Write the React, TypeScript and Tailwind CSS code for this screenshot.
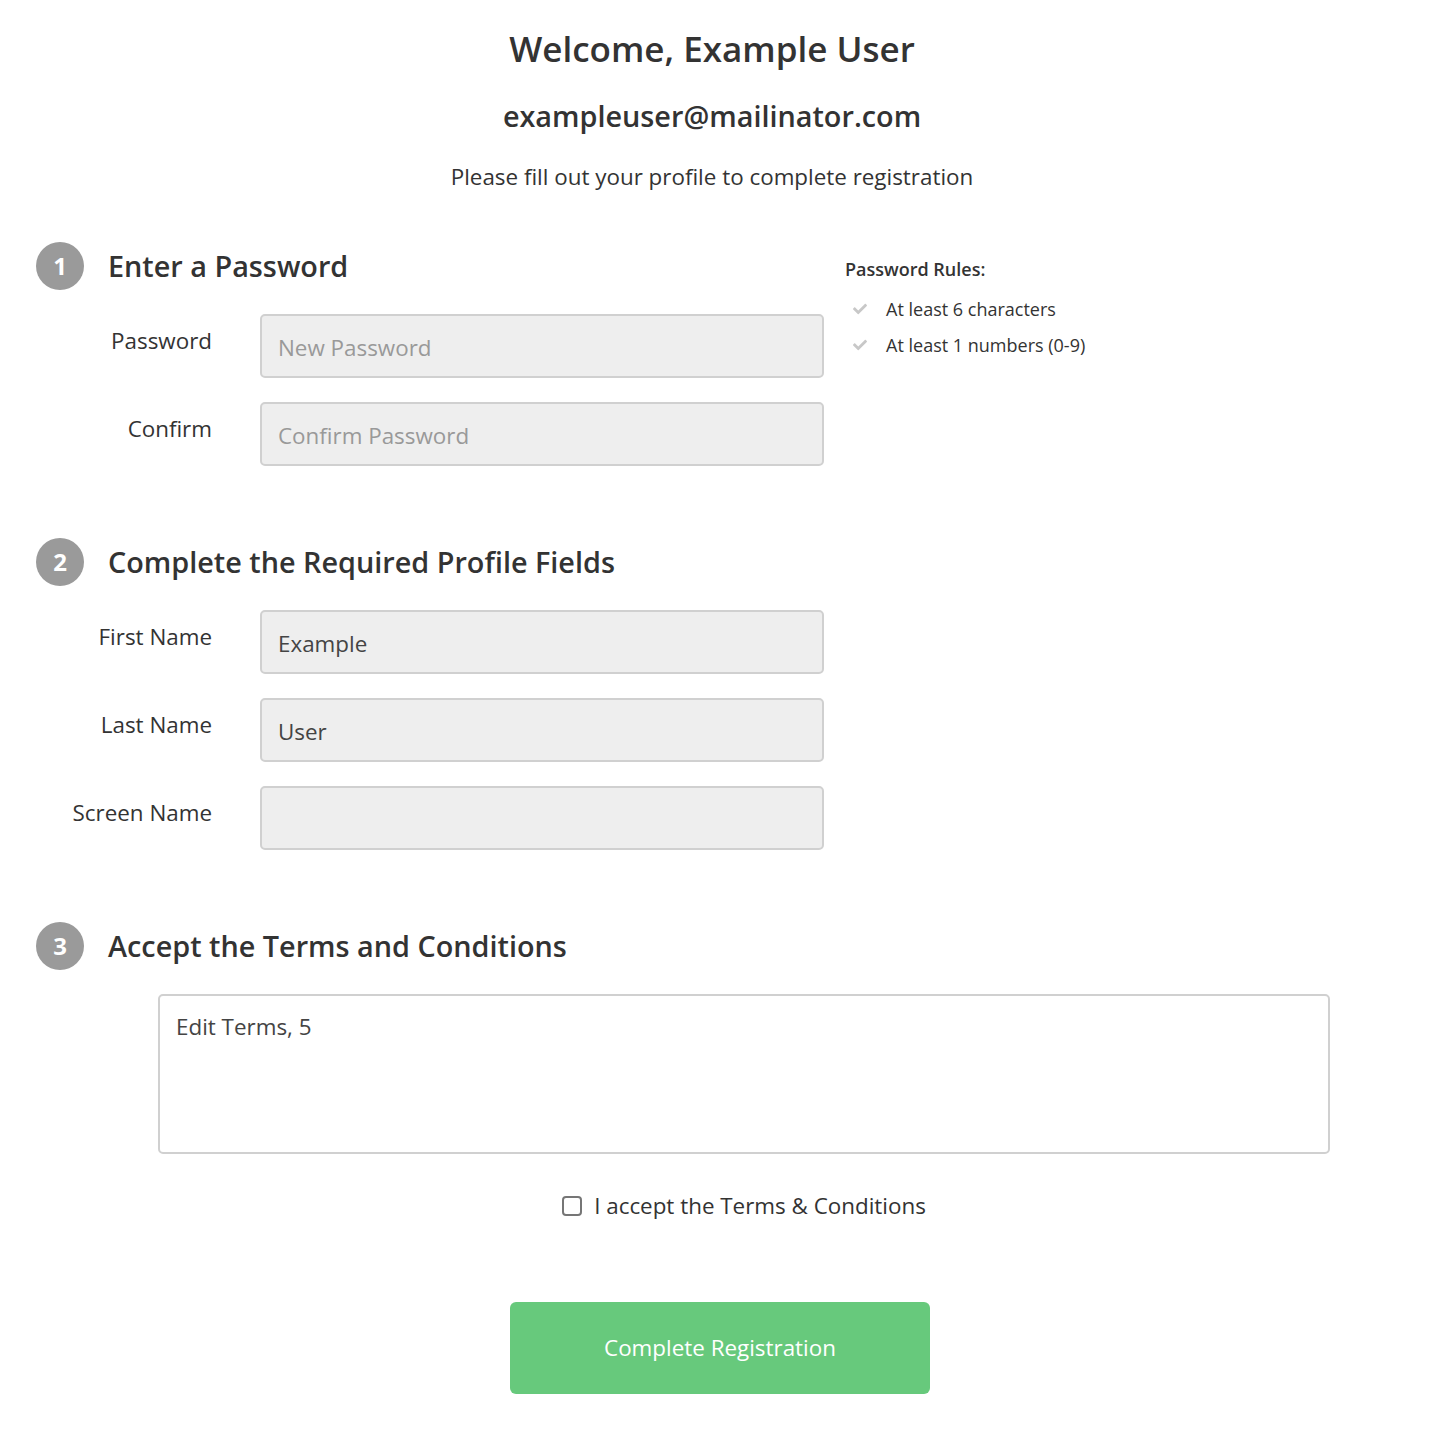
import React from 'react';
import { FaCheck } from 'react-icons/fa';

const StepHeader = ({ n, title }: { n: number; title: string }) => (
  <div className="flex items-center gap-6 h-12">
    <div className="w-12 h-12 rounded-full bg-[#9a9a9a] text-white flex items-center justify-center text-[24px] font-bold leading-none">
      {n}
    </div>
    <h2 className="text-[28.8px] font-semibold text-[#333]">{title}</h2>
  </div>
);

const Field = ({
  label,
  placeholder,
  value,
}: {
  label: string;
  placeholder?: string;
  value?: string;
}) => (
  <div className="flex items-start">
    <label className="w-[176px] text-right text-[22.4px] leading-[30px] text-[#333] pt-[12px]">{label}</label>
    <input
      type="text"
      placeholder={placeholder}
      defaultValue={value}
      className="ml-12 w-[564px] h-16 bg-[#eee] border-2 border-[#d0d0d0] rounded-[5px] px-4 pt-[2px] text-[22.4px] text-[#444] placeholder:text-[#999] outline-none"
    />
  </div>
);

const rules = ['At least 6 characters', 'At least 1 numbers (0-9)'];

export default function App() {
  return (
    <div className="w-[1430px] min-h-[1446px] bg-white text-[#333] pb-12" style={{ fontFamily: '"Open Sans", sans-serif' }}>
      <div className="flex flex-col items-center pt-[29px] pr-[6px]">
        <h1 className="text-[35px] leading-[40px] font-semibold text-[#333]">Welcome, Example User</h1>
        <div className="mt-[30px] text-[28.8px] leading-[34px] font-semibold text-[#333]">exampleuser@mailinator.com</div>
        <p className="mt-[29px] text-[22.4px] leading-[30px] text-[#333]">Please fill out your profile to complete registration</p>
      </div>

      <div className="pl-9 mt-[50px]">
        {/* Step 1 */}
        <div className="flex">
          <div className="flex flex-col">
            <StepHeader n={1} title="Enter a Password" />
            <div className="mt-6 flex flex-col gap-6">
              <Field label="Password" placeholder="New Password" />
              <Field label="Confirm" placeholder="Confirm Password" />
            </div>
          </div>
          <div className="ml-[21px] pt-[15px]">
            <div className="text-[18px] leading-6 font-semibold text-[#333]">Password Rules:</div>
            <ul className="mt-[10px]">
              {rules.map((r) => (
                <li key={r} className="flex items-center h-9 text-[18px] text-[#333]">
                  <FaCheck className="ml-2 mr-[19px] text-[#c8c8c8]" size={14} />
                  {r}
                </li>
              ))}
            </ul>
          </div>
        </div>

        {/* Step 2 */}
        <div className="mt-[72px]">
          <StepHeader n={2} title="Complete the Required Profile Fields" />
          <div className="mt-6 flex flex-col gap-6">
            <Field label="First Name" value="Example" />
            <Field label="Last Name" value="User" />
            <Field label="Screen Name" />
          </div>
        </div>

        {/* Step 3 */}
        <div className="mt-[72px]">
          <StepHeader n={3} title="Accept the Terms and Conditions" />
          <textarea
            defaultValue="Edit Terms, 5"
            className="mt-6 ml-[122px] block w-[1172px] h-40 border-2 border-[#d0d0d0] rounded-[5px] px-4 py-[16px] text-[22.4px] leading-[30px] text-[#444] resize-none outline-none"
          />
        </div>
      </div>

      <label className="mt-[37px] flex items-center justify-center gap-3 pl-[58px] text-[22.4px] leading-[30px] text-[#333]">
        <input
          type="checkbox"
          className="appearance-none w-5 h-5 border-2 border-[#767676] rounded-[4px] bg-white"
        />
        I accept the Terms &amp; Conditions
      </label>

      <div className="mt-[81px] flex justify-center pl-[10px]">
        <button className="w-[420px] h-[92px] rounded-[6px] bg-[#67c97c] text-white text-[22.4px]">
          Complete Registration
        </button>
      </div>
    </div>
  );
}
